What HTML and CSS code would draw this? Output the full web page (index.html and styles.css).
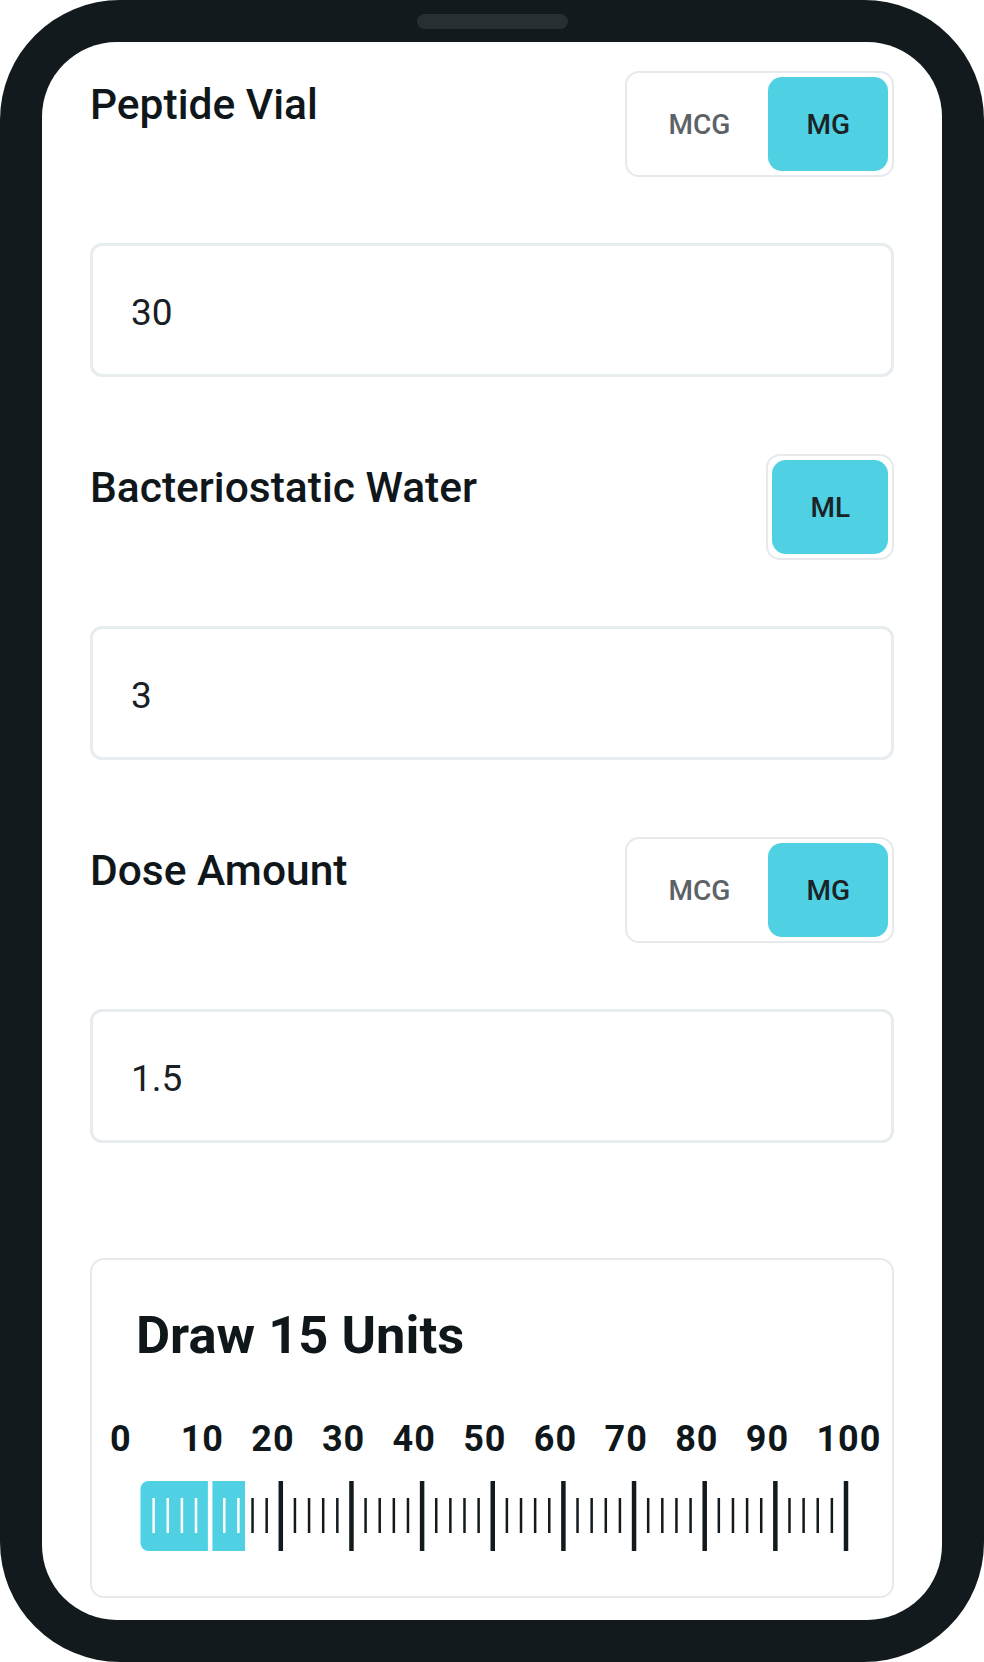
FILE: index.html
```html
<!DOCTYPE html>
<html lang="en">
<head>
<meta charset="utf-8">
<title>Peptide Calculator</title>
<link rel="stylesheet" href="styles.css">
</head>
<body>
<div class="phone">
  <div class="notch"></div>
  <div class="screen">
    <section class="field">
      <div class="field-head">
        <h2 class="field-title">Peptide Vial</h2>
        <div class="toggle">
          <span class="opt">MCG</span>
          <span class="opt active">MG</span>
        </div>
      </div>
      <div class="input">30</div>
    </section>

    <section class="field">
      <div class="field-head">
        <h2 class="field-title">Bacteriostatic Water</h2>
        <div class="toggle">
          <span class="opt active">ML</span>
        </div>
      </div>
      <div class="input">3</div>
    </section>

    <section class="field last">
      <div class="field-head">
        <h2 class="field-title">Dose Amount</h2>
        <div class="toggle">
          <span class="opt">MCG</span>
          <span class="opt active">MG</span>
        </div>
      </div>
      <div class="input">1.5</div>
    </section>

    <div class="card">
      <h1 class="card-title">Draw 15 Units</h1>
      <div class="labels">
        <span>0</span><span>10</span><span>20</span><span>30</span><span>40</span><span>50</span><span>60</span><span>70</span><span>80</span><span>90</span><span>100</span>
      </div>
      <svg class="ruler" width="716" height="70" viewBox="0 0 716 70" xmlns="http://www.w3.org/2000/svg">
        <path d="M12.5 0 H109 V70 H12.5 A8 8 0 0 1 4.5 62 V8 A8 8 0 0 1 12.5 0 Z" fill="#4fd1e3"/>
        <g fill="#ffffff">
          <rect x="71.9" y="0" width="4.5" height="70"/>
          <rect x="16.38" y="17" width="2.5" height="35"/>
          <rect x="30.51" y="17" width="2.5" height="35"/>
          <rect x="44.64" y="17" width="2.5" height="35"/>
          <rect x="58.77" y="17" width="2.5" height="35"/>
          <rect x="87.03" y="17" width="2.5" height="35"/>
          <rect x="101.16" y="17" width="2.5" height="35"/>
        </g>
        <g fill="#131a1e">
          <rect x="142.55" y="0" width="4.5" height="70"/>
          <rect x="213.2" y="0" width="4.5" height="70"/>
          <rect x="283.85" y="0" width="4.5" height="70"/>
          <rect x="354.5" y="0" width="4.5" height="70"/>
          <rect x="425.15" y="0" width="4.5" height="70"/>
          <rect x="495.8" y="0" width="4.5" height="70"/>
          <rect x="566.45" y="0" width="4.5" height="70"/>
          <rect x="637.1" y="0" width="4.5" height="70"/>
          <rect x="707.75" y="0" width="4.5" height="70"/>

          <rect x="115.29" y="17" width="2.5" height="35"/>
          <rect x="129.42" y="17" width="2.5" height="35"/>
          <rect x="157.68" y="17" width="2.5" height="35"/>
          <rect x="171.81" y="17" width="2.5" height="35"/>
          <rect x="185.94" y="17" width="2.5" height="35"/>
          <rect x="200.07" y="17" width="2.5" height="35"/>
          <rect x="228.33" y="17" width="2.5" height="35"/>
          <rect x="242.46" y="17" width="2.5" height="35"/>
          <rect x="256.59" y="17" width="2.5" height="35"/>
          <rect x="270.72" y="17" width="2.5" height="35"/>
          <rect x="298.98" y="17" width="2.5" height="35"/>
          <rect x="313.11" y="17" width="2.5" height="35"/>
          <rect x="327.24" y="17" width="2.5" height="35"/>
          <rect x="341.37" y="17" width="2.5" height="35"/>
          <rect x="369.63" y="17" width="2.5" height="35"/>
          <rect x="383.76" y="17" width="2.5" height="35"/>
          <rect x="397.89" y="17" width="2.5" height="35"/>
          <rect x="412.02" y="17" width="2.5" height="35"/>
          <rect x="440.28" y="17" width="2.5" height="35"/>
          <rect x="454.41" y="17" width="2.5" height="35"/>
          <rect x="468.54" y="17" width="2.5" height="35"/>
          <rect x="482.67" y="17" width="2.5" height="35"/>
          <rect x="510.93" y="17" width="2.5" height="35"/>
          <rect x="525.06" y="17" width="2.5" height="35"/>
          <rect x="539.19" y="17" width="2.5" height="35"/>
          <rect x="553.32" y="17" width="2.5" height="35"/>
          <rect x="581.58" y="17" width="2.5" height="35"/>
          <rect x="595.71" y="17" width="2.5" height="35"/>
          <rect x="609.84" y="17" width="2.5" height="35"/>
          <rect x="623.97" y="17" width="2.5" height="35"/>
          <rect x="652.23" y="17" width="2.5" height="35"/>
          <rect x="666.36" y="17" width="2.5" height="35"/>
          <rect x="680.49" y="17" width="2.5" height="35"/>
          <rect x="694.62" y="17" width="2.5" height="35"/>
        </g>
      </svg>
    </div>
  </div>
</div>
</body>
</html>
```

FILE: styles.css
```css
* {
  box-sizing: border-box;
}

html, body {
  margin: 0;
  padding: 0;
  background: #ffffff;
}

body {
  font-family: Roboto, "Liberation Sans", Arial, sans-serif;
  color: #131a1e;
}

.phone {
  position: relative;
  width: 984px;
  height: 1662px;
  padding: 42px;
  background: #121a1d;
  border-radius: 120px;
}

.notch {
  position: absolute;
  left: 417px;
  top: 14px;
  width: 151px;
  height: 15px;
  border-radius: 8px;
  background: #272f32;
}

.screen {
  height: 100%;
  background: #ffffff;
  border-radius: 75px;
  overflow: hidden;
  padding: 29px 48px 0 48px;
}

.field {
  margin-bottom: 77px;
}

.field.last {
  margin-bottom: 115px;
}

.field-head {
  display: flex;
  justify-content: space-between;
  align-items: flex-start;
  margin-bottom: 66px;
}

.field-title {
  margin: 9px 0 0 0;
  font-size: 42.5px;
  line-height: 49px;
  font-weight: 500;
  color: #10171b;
}

.toggle {
  display: flex;
  padding: 4px;
  border: 2px solid #e6eaed;
  border-radius: 14px;
  background: #ffffff;
}

.opt {
  display: flex;
  align-items: center;
  justify-content: center;
  height: 94px;
  padding: 0 38px;
  border-radius: 14px;
  font-size: 28px;
  font-weight: 500;
  color: #5d6267;
}

.opt.active {
  background: #4fd1e3;
  color: #1b2327;
}

.input {
  display: flex;
  align-items: center;
  height: 134px;
  padding: 4px 0 0 38px;
  border: 3px solid #e7ecef;
  border-radius: 12px;
  font-size: 37px;
  font-weight: 400;
  color: #192024;
}

.card {
  border: 2px solid #e6eaed;
  border-radius: 14px;
  padding: 45px 44px 45px 44px;
}

.card-title {
  margin: 0;
  font-size: 52.5px;
  line-height: 61px;
  font-weight: 700;
  color: #10171b;
}

.labels {
  display: grid;
  grid-template-columns: repeat(10, 70.65px) auto;
  margin: 53px 0 0 -26px;
  font-size: 36px;
  line-height: 41px;
  font-weight: 700;
  letter-spacing: 1px;
  color: #10171b;
  white-space: nowrap;
}

.ruler {
  display: block;
  margin-top: 21px;
}
```
